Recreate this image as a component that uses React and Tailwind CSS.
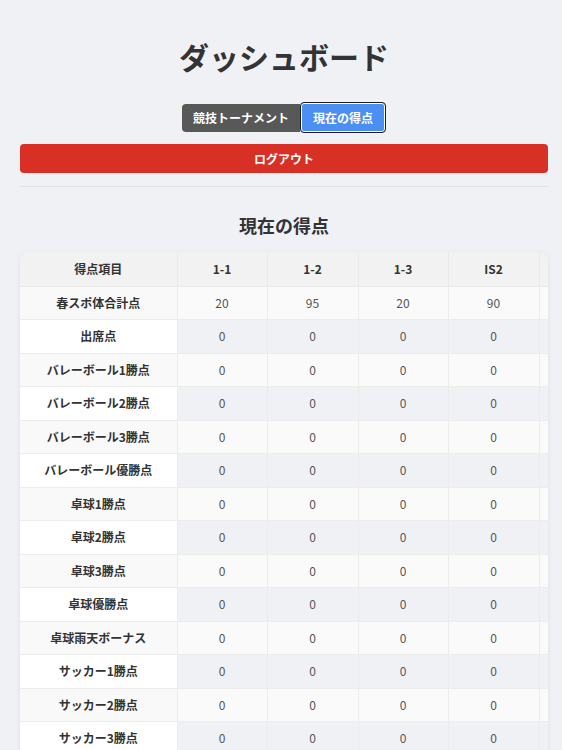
import React from 'react';

const COLUMNS = ['1-1', '1-2', '1-3', 'IS2'];

const ROWS = [
  { label: '春スポ体合計点', values: [20, 95, 20, 90] },
  { label: '出席点' },
  { label: 'バレーボール1勝点' },
  { label: 'バレーボール2勝点' },
  { label: 'バレーボール3勝点' },
  { label: 'バレーボール優勝点' },
  { label: '卓球1勝点' },
  { label: '卓球2勝点' },
  { label: '卓球3勝点' },
  { label: '卓球優勝点' },
  { label: '卓球雨天ボーナス' },
  { label: 'サッカー1勝点' },
  { label: 'サッカー2勝点' },
  { label: 'サッカー3勝点' },
  { label: 'サッカー優勝点' },
];

export default function App() {
  return (
    <div
      className="min-h-screen bg-[#f0f1f5] text-[#333]"
      style={{ fontFamily: '"Noto Sans CJK JP", "Noto Sans", sans-serif' }}
    >
      <div className="pl-5 pr-[14px] pt-[38px]">
        <h1 className="text-center text-[30px] leading-[36px] font-bold text-[#333]">ダッシュボード</h1>

        <div className="mt-[28px] flex justify-center items-center">
          <button className="h-[28px] px-[11px] bg-[#585858] text-white text-[12px] font-bold rounded-l-[4px]">
            競技トーナメント
          </button>
          <button className="h-[31px] px-[12px] bg-[#4b8ff2] text-white text-[12px] font-bold rounded-[4px] border border-[#1f1f1f] shadow-[inset_0_0_0_1px_#ffffff]">
            現在の得点
          </button>
        </div>

        <button className="mt-[11px] w-full h-[29px] bg-[#d93025] text-white text-[12px] font-bold rounded-[4px]">
          ログアウト
        </button>

        <div className="mt-[13px] border-t border-[#e0e1e6]" />

        <h2 className="mt-[25px] text-center text-[18px] leading-[27px] font-bold text-[#333]">現在の得点</h2>

        <div className="mt-[13px] rounded-lg shadow-[0_1px_4px_rgba(0,0,0,0.08)] overflow-hidden">
          <table className="table-fixed border-collapse w-[610px] text-[12px]">
            <colgroup>
              <col className="w-[157px]" />
              <col className="w-[90px]" />
              <col className="w-[91px]" />
              <col className="w-[90px]" />
              <col className="w-[91px]" />
              <col className="w-[91px]" />
            </colgroup>
            <thead>
              <tr className="bg-[#f2f2f2] h-[34px]">
                <th className="font-bold text-[#333] border-r border-b border-[#e9e9e9]">得点項目</th>
                {COLUMNS.map(c => (
                  <th key={c} className="font-bold text-[#333] border-r border-b border-[#e9e9e9]">{c}</th>
                ))}
                <th className="border-r border-b border-[#e9e9e9]" />
              </tr>
            </thead>
            <tbody>
              {ROWS.map((row, i) => {
                const odd = i % 2 === 0;
                return (
                  <tr key={row.label} className={odd ? 'bg-[#fafafa] h-[33.5px]' : 'bg-[#f0f1f5] h-[33.5px]'}>
                    <td className={`text-center font-bold text-[#333] border-r border-b border-[#ececec] ${odd ? 'bg-[#f9f9f9]' : 'bg-white'}`}>
                      {row.label}
                    </td>
                    {COLUMNS.map((c, j) => (
                      <td key={c} className="text-center text-[#555] border-r border-b border-[#ececec]">
                        {row.values ? row.values[j] : 0}
                      </td>
                    ))}
                    <td className="border-r border-b border-[#ececec]" />
                  </tr>
                );
              })}
            </tbody>
          </table>
        </div>
      </div>
    </div>
  );
}
